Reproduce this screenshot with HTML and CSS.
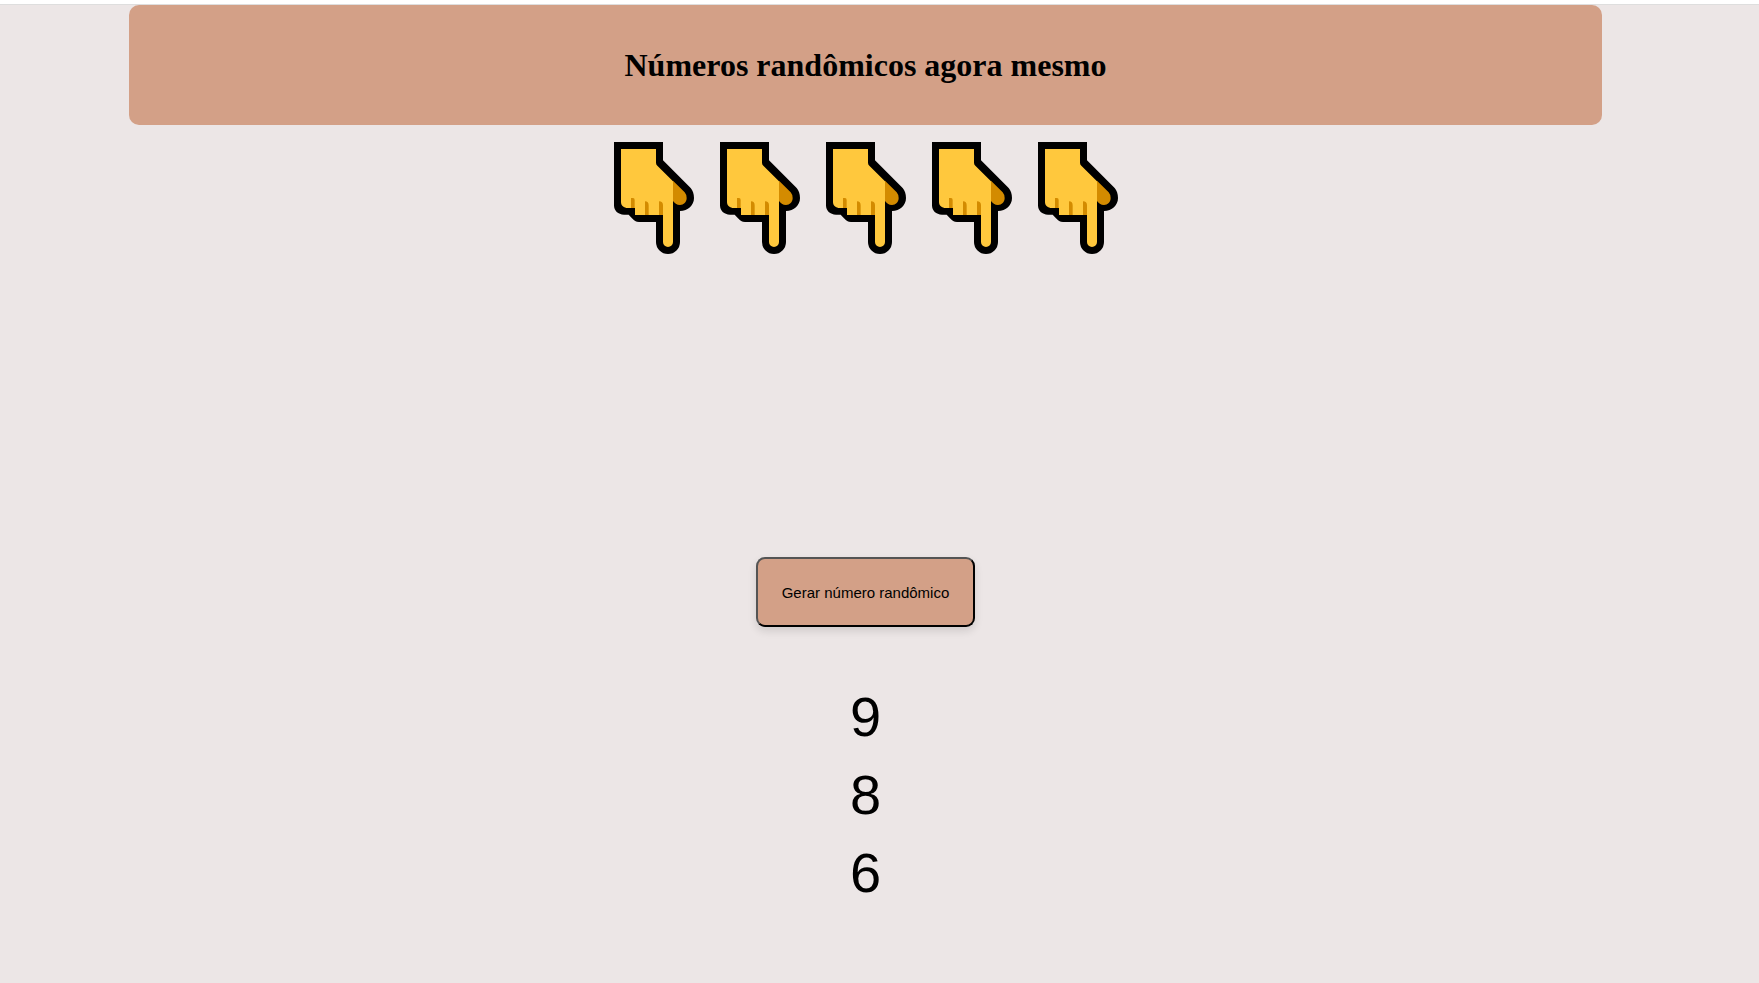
FILE: index.html
```html
<!DOCTYPE html>
<html lang="pt-BR">
<head>
<meta charset="utf-8">
<meta name="viewport" content="width=device-width, initial-scale=1">
<title>Números randômicos</title>
<link rel="stylesheet" href="styles.css">
</head>
<body>
<svg class="symbols" width="0" height="0" aria-hidden="true">
  <symbol id="hand" viewBox="0 0 240 336">
    <path fill="#000" d="M0 0H147V55L230 138C236 145 240 156 240 168C240 190 222 207 198 207V300A36 36 0 0 1 126 300V240H75C66 240 60 236 54 229L44 218H30C12 218 0 206 0 190Z"/>
    <path fill="#ffc83d" d="M21 21H126V62Q126 68 130 71L177 118V300A15 15 0 0 1 147 300V219H63V198H42C29 198 21 191 21 180Z"/>
    <path fill="#d38b00" d="M177 116L212 151Q218 158 218 168C218 180 209 189 198 189C188 189 182 184 177 177ZM51 198V168H57Q62 168 62 174V198ZM93 219V178Q104 178 104 190V219ZM135 219V178Q147 178 147 190V219Z"/>
  </symbol>
</svg>
<main class="page">
  <header class="banner"><h1 class="title">Números randômicos agora mesmo</h1></header>
  <div class="hands" role="img" aria-label="Mãos apontando para baixo">
    <svg class="hand"><use href="#hand"/></svg>
    <svg class="hand"><use href="#hand"/></svg>
    <svg class="hand"><use href="#hand"/></svg>
    <svg class="hand"><use href="#hand"/></svg>
    <svg class="hand"><use href="#hand"/></svg>
  </div>
  <button class="generate" type="button">Gerar número randômico</button>
  <div class="numbers">
    <div>9</div>
    <div>8</div>
    <div>6</div>
  </div>
</main>
</body>
</html>
```
FILE: styles.css
```css
* { box-sizing: border-box; }

body {
  margin: 0;
  min-height: 100vh;
  display: flex;
  flex-direction: column;
  border-top: 4px solid #fff;
  background: #ece6e6;
  color: #000;
}

.symbols { position: absolute; }

.page {
  flex: 1;
  display: flex;
  flex-direction: column;
  align-items: center;
  padding: 0 157px 32px 129px;
  border-top: 1px solid #dedede;
}

.banner {
  align-self: stretch;
  min-height: 120px;
  display: flex;
  align-items: center;
  justify-content: center;
  border-radius: 10px;
  background: #d3a087;
}

.title {
  margin: 0;
  font: bold 32px "Liberation Serif", "Times New Roman", serif;
  text-align: center;
}

.hands {
  display: flex;
  gap: 26px;
  margin-top: 17px;
}

.hand {
  width: 80px;
  height: 112px;
}

.generate {
  margin-top: 303px;
  padding: 25px 24px 23px;
  min-height: 70px;
  border: 2px outset #000;
  border-radius: 9px;
  background: #d3a087;
  color: #000;
  font: 15px/18px "Liberation Sans", Arial, sans-serif;
  box-shadow: 0 4px 8px rgba(0, 0, 0, 0.12);
}

.numbers {
  margin-top: 51px;
  text-align: center;
  font: 56px/78px "Liberation Sans", Arial, sans-serif;
}
```
